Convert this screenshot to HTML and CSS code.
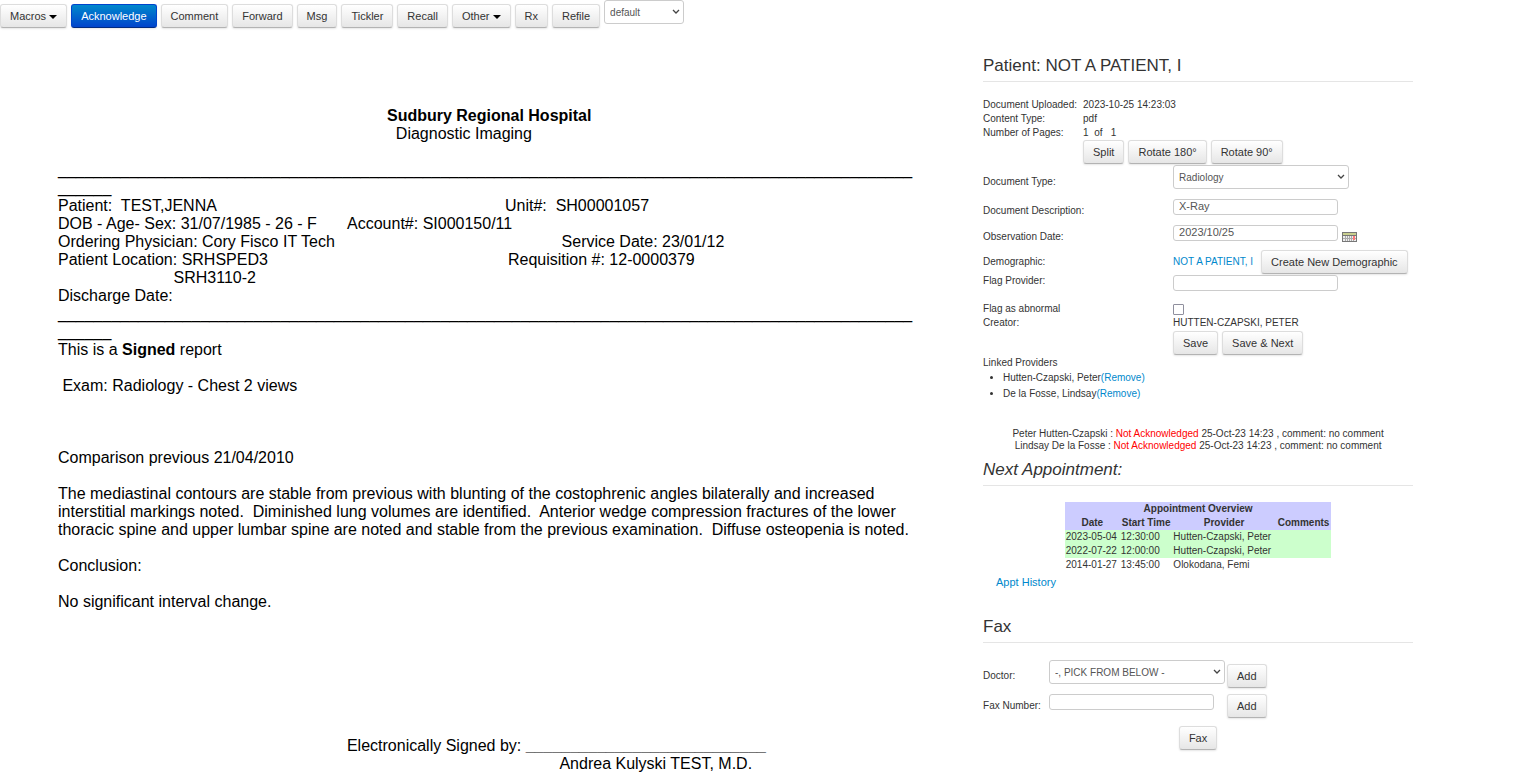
FILE: index.html
```
<!DOCTYPE html>
<html lang="en">
<head>
    <meta charset="UTF-8">
    <meta name="viewport" content="width=device-width, initial-scale=1.0">
    <title>Document</title>
    <link rel="stylesheet" href="styles.css">
</head>
<body>
    <nav class="toolbar">
        <button type="button" class="btn">Macros <span class="caret"></span></button>
        <button type="button" class="btn btn-primary">Acknowledge</button>
        <button type="button" class="btn">Comment</button>
        <button type="button" class="btn">Forward</button>
        <button type="button" class="btn">Msg</button>
        <button type="button" class="btn">Tickler</button>
        <button type="button" class="btn">Recall</button>
        <button type="button" class="btn">Other <span class="caret"></span></button>
        <button type="button" class="btn">Rx</button>
        <button type="button" class="btn">Refile</button>
        <select class="queue" aria-label="Queue">
            <option>default</option>
        </select>
    </nav>

    <main class="layout">
        <article class="document">
<pre class="report">
                                                                          <b>Sudbury Regional Hospital</b>
                                                                            Diagnostic Imaging

________________________________________________________________________________________________
______
Patient:  TEST,JENNA                                                                 Unit#:  SH00001057
DOB - Age- Sex: 31/07/1985 - 26 - F       Account#: SI000150/11
Ordering Physician: Cory Fisco IT Tech                                                   Service Date: 23/01/12
Patient Location: SRHSPED3                                                      Requisition #: 12-0000379
                          SRH3110-2
Discharge Date:
________________________________________________________________________________________________
______
This is a <b>Signed</b> report

 Exam: Radiology - Chest 2 views



Comparison previous 21/04/2010

The mediastinal contours are stable from previous with blunting of the costophrenic angles bilaterally and increased
interstitial markings noted.  Diminished lung volumes are identified.  Anterior wedge compression fractures of the lower
thoracic spine and upper lumbar spine are noted and stable from the previous examination.  Diffuse osteopenia is noted.

Conclusion:

No significant interval change.







                                                                 Electronically Signed by: <b>___________________________</b>
                                                                                                                 Andrea Kulyski TEST, M.D.
</pre>
        </article>

        <aside class="panel">
            <h2 class="legend">Patient: NOT A PATIENT, I</h2>

            <dl class="info">
                <dt>Document Uploaded:</dt>
                <dd>2023-10-25 14:23:03</dd>
                <dt>Content Type:</dt>
                <dd>pdf</dd>
                <dt>Number of Pages:</dt>
                <dd class="pages">1  of   1</dd>
                <dd class="buttons">
                    <button type="button" class="btn">Split</button>
                    <button type="button" class="btn">Rotate 180°</button>
                    <button type="button" class="btn">Rotate 90°</button>
                </dd>
            </dl>

            <form class="details">
                <div class="row row-select">
                    <label for="docType">Document Type:</label>
                    <select id="docType" class="wide">
                        <option>Radiology</option>
                    </select>
                </div>
                <div class="row row-input">
                    <label for="docDesc">Document Description:</label>
                    <input type="text" id="docDesc" class="text" value="X-Ray">
                </div>
                <div class="row row-input">
                    <label for="obsDate">Observation Date:</label>
                    <input type="text" id="obsDate" class="text" value="2023/10/25">
                    <button type="button" class="calendar" aria-label="Calendar">
                        <svg width="15" height="10" viewBox="0 0 15 10" shape-rendering="crispEdges">
                            <rect x="0" y="0" width="15" height="10" fill="#777"/>
                            <rect x="1" y="1" width="13" height="2" fill="#c9cf8f"/>
                            <rect x="1" y="4" width="13" height="5" fill="#eee"/>
                            <path d="M3 4v5M5 4v5M7 4v5M9 4v5M11 4v5" stroke="#aaa" stroke-width="1"/>
                            <path d="M1 6h13" stroke="#aaa" stroke-width="1"/>
                            <rect x="11" y="4" width="2" height="4" fill="#f77"/>
                        </svg>
                    </button>
                </div>
                <div class="row">
                    <span>Demographic:</span>
                    <a href="#" class="patient">NOT A PATIENT, I</a>
                    <button type="button" class="btn">Create New Demographic</button>
                </div>
                <div class="row row-flag">
                    <label for="flagProvider">Flag Provider:</label>
                    <input type="text" id="flagProvider" class="text">
                </div>
                <div class="row">
                    <label for="abnormal">Flag as abnormal</label>
                    <input type="checkbox" id="abnormal" class="check">
                </div>
                <div class="row">
                    <span>Creator:</span>
                    <span>HUTTEN-CZAPSKI, PETER</span>
                </div>
                <div class="buttons save">
                    <button type="button" class="btn">Save</button>
                    <button type="button" class="btn">Save &amp; Next</button>
                </div>
            </form>

            <p class="linked">Linked Providers</p>
            <ul class="providers">
                <li>Hutten-Czapski, Peter<a href="#">(Remove)</a></li>
                <li>De la Fosse, Lindsay<a href="#">(Remove)</a></li>
            </ul>

            <div class="acks">
                Peter Hutten-Czapski : <span class="unack">Not Acknowledged</span> 25-Oct-23 14:23 , comment: no comment<br>
                Lindsay De la Fosse : <span class="unack">Not Acknowledged</span> 25-Oct-23 14:23 , comment: no comment
            </div>

            <h2 class="legend next">Next Appointment:</h2>
            <table class="appointments">
                <thead>
                    <tr><th colspan="4">Appointment Overview</th></tr>
                    <tr><th>Date</th><th>Start Time</th><th>Provider</th><th>Comments</th></tr>
                </thead>
                <tbody>
                    <tr class="seen"><td>2023-05-04</td><td>12:30:00</td><td>Hutten-Czapski, Peter</td><td></td></tr>
                    <tr class="seen"><td>2022-07-22</td><td>12:00:00</td><td>Hutten-Czapski, Peter</td><td></td></tr>
                    <tr><td>2014-01-27</td><td>13:45:00</td><td>Olokodana, Femi</td><td></td></tr>
                </tbody>
            </table>
            <a href="#" class="history">Appt History</a>

            <h2 class="legend fax-title">Fax</h2>
            <form class="fax">
                <label for="doctor">Doctor:</label>
                <select id="doctor" class="wide">
                    <option>-, PICK FROM BELOW -</option>
                </select>
                <button type="button" class="btn">Add</button>
                <label for="faxNumber">Fax Number:</label>
                <input type="text" id="faxNumber" class="text">
                <button type="button" class="btn">Add</button>
            </form>
            <div class="send">
                <button type="button" class="btn">Fax</button>
            </div>
        </aside>
    </main>
</body>
</html>
```

FILE: styles.css
```
* {
    box-sizing: border-box;
}

body {
    margin: 0;
    background: #fff;
    color: #333;
    font-family: "Liberation Sans", Arial, sans-serif;
    font-size: 10px;
    line-height: 14px;
}

a {
    color: #08c;
    text-decoration: none;
}

/* ===== Buttons and fields ===== */
.btn {
    height: 24px;
    padding: 3px 9px;
    border: 1px solid #ccc;
    border-color: #ddd #ddd #b3b3b3;
    border-radius: 3px;
    background: linear-gradient(to bottom, #fff, #e6e6e6);
    box-shadow: 0 1px 2px rgba(0, 0, 0, 0.1);
    color: #333;
    font-family: inherit;
    font-size: 11px;
    line-height: 16px;
    white-space: nowrap;
}

.btn-primary {
    border-color: #04c #04c #002a80;
    background: linear-gradient(to bottom, #08c, #04c);
    color: #fff;
}

.caret {
    display: inline-block;
    border: 4px solid transparent;
    border-top-color: #000;
    border-bottom: 0;
    vertical-align: middle;
}

select,
.text {
    margin: 0;
    border: 1px solid #ccc;
    border-radius: 3px;
    background: #fff;
    color: #555;
    font-family: inherit;
}

select {
    height: 24px;
    padding: 0 16px 0 5px;
    background: #fff url("data:image/svg+xml,%3Csvg xmlns='http://www.w3.org/2000/svg' width='8' height='6'%3E%3Cpath d='M1 1l3 3 3-3' fill='none' stroke='%23444' stroke-width='1.3'/%3E%3C/svg%3E") no-repeat right 3px center;
    font-size: 10px;
    appearance: none;
}

.text {
    width: 165px;
    height: 16px;
    padding: 0 5px 1px;
    font-size: 11px;
}

.wide {
    width: 176px;
}

.buttons {
    display: flex;
    gap: 4px;
}

/* ===== Toolbar ===== */
.toolbar {
    display: flex;
    flex-wrap: wrap;
    gap: 4px;
    height: 28px;
}

.toolbar .btn {
    margin-top: 4px;
}

.queue {
    width: 80px;
}

/* ===== Layout ===== */
.layout {
    display: grid;
    grid-template-columns: 64% 28%;
}

.document {
    padding: 79px 0 0 58px;
    overflow: hidden;
}

.report {
    margin: 0;
    color: #000;
    font-family: "Liberation Sans", Arial, sans-serif;
    font-size: 16px;
    line-height: 18px;
}

.panel {
    padding-top: 22px;
}

.legend {
    margin: 0;
    border-bottom: 1px solid #e5e5e5;
    font-size: 17px;
    font-weight: normal;
    line-height: 31px;
}

/* ===== Document details ===== */
.info {
    display: grid;
    grid-template-columns: 100px 1fr;
    margin: 16px 0 0;
}

.info dd {
    margin: 0;
}

.pages {
    white-space: pre;
}

.info .buttons {
    grid-column: 2;
}

.details {
    margin-top: 1px;
}

.row {
    display: flex;
    align-items: center;
}

.row > :first-child {
    width: 190px;
    flex: none;
}

.row-select {
    height: 33px;
}

.row-input {
    height: 26px;
}

.row-select select,
.row-input .text {
    margin-bottom: 9px;
}

.row-flag {
    align-items: flex-start;
    height: 28px;
}

.row-flag .text {
    margin-top: 1px;
}

.calendar {
    display: flex;
    margin-left: 4px;
    padding: 0;
    border: 0;
    background: none;
}

.patient {
    margin-right: 8px;
}

.check {
    width: 11px;
    height: 11px;
    margin: 0;
    border: 1px solid #8f8f9d;
    border-radius: 1px;
    appearance: none;
}

.save {
    margin: 1px 0 0 190px;
}

.linked {
    margin: 1px 0 0;
}

.providers {
    margin: 0;
    padding-left: 20px;
    line-height: 16px;
}

.acks {
    margin: 26px 0 0;
    line-height: 12px;
    text-align: center;
}

.unack {
    color: #f00;
}

/* ===== Appointments ===== */
.next {
    margin-top: 2px;
    font-style: italic;
}

.appointments {
    width: 62%;
    margin: 16px auto 0;
    border-collapse: collapse;
}

.appointments th,
.appointments td {
    height: 14px;
    padding: 0 1px;
    white-space: nowrap;
}

.appointments thead {
    background: #ccf;
}

.seen {
    background: #cfc;
}

.history {
    display: block;
    margin: 2px 0 0 13px;
    font-size: 11px;
    line-height: 16px;
}

/* ===== Fax ===== */
.fax-title {
    margin-top: 21px;
}

.fax {
    display: grid;
    grid-template-columns: 64px 176px auto;
    grid-template-rows: 30px 30px;
    align-items: center;
    justify-content: start;
    column-gap: 2px;
    margin-top: 18px;
}

.fax select,
.fax .text {
    margin-bottom: 8px;
}

.send {
    display: flex;
    justify-content: center;
    margin-top: 5px;
}
```
